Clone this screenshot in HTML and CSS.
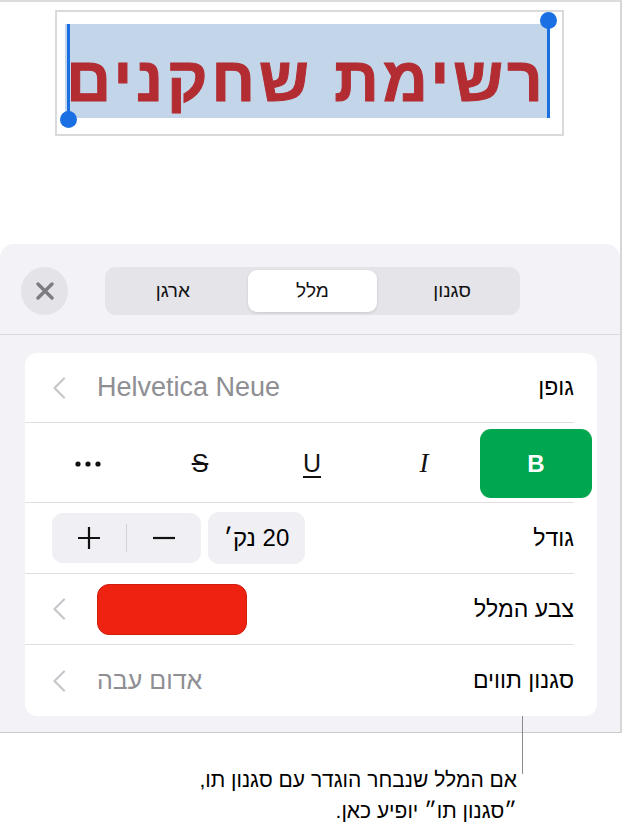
FILE: index.html
```html
<!DOCTYPE html>
<html lang="he">
<head>
<meta charset="utf-8">
<title>Text format</title>
<link rel="stylesheet" href="styles.css">
</head>
<body>
<div class="frame">
  <div class="canvas">
    <div class="title-box">
      <div class="highlight">
        <span class="title-text" dir="rtl">רשימת שחקנים</span>
        <span class="caret caret-left"></span>
        <span class="caret caret-right"></span>
      </div>
    </div>
  </div>
  <div class="sheet">
    <div class="sheet-header">
      <div class="close-btn">
        <svg width="18" height="18" viewBox="0 0 18 18"><path d="M2 2 L16 16 M16 2 L2 16" stroke="#7c7c81" stroke-width="3.4" stroke-linecap="round" fill="none"/></svg>
      </div>
      <div class="segmented" dir="ltr">
        <div class="seg">ארגן</div>
        <div class="seg active">מלל</div>
        <div class="seg">סגנון</div>
      </div>
    </div>
    <div class="card" dir="rtl">
      <div class="row">
        <span class="label">גופן</span>
        <span class="value-group">
          <span class="value latin" dir="ltr">Helvetica Neue</span>
          <svg class="chev" width="14" height="22" viewBox="0 0 14 22"><path d="M12 1.5 L2.5 11 L12 20.5" stroke="#c6c6cb" stroke-width="2.2" fill="none" stroke-linecap="round" stroke-linejoin="round"/></svg>
        </span>
      </div>
      <div class="row style-row">
        <div class="style-grid" dir="ltr">
          <div class="sbtn dots">
            <svg width="26" height="6" viewBox="0 0 26 6"><circle cx="3" cy="3" r="2.6" fill="#111"/><circle cx="13" cy="3" r="2.6" fill="#111"/><circle cx="23" cy="3" r="2.6" fill="#111"/></svg>
          </div>
          <div class="sbtn strike">S</div>
          <div class="sbtn under">U</div>
          <div class="sbtn ital">I</div>
          <div class="sbtn bold active">B</div>
        </div>
      </div>
      <div class="row">
        <span class="label">גודל</span>
        <span class="size-group">
          <span class="size-value">20 נק׳</span>
          <span class="stepper" dir="ltr">
            <span class="step">
              <svg width="24" height="24" viewBox="0 0 24 24"><path d="M12 1 V23 M1 12 H23" stroke="#111" stroke-width="2.2" fill="none"/></svg>
            </span>
            <span class="step-div"></span>
            <span class="step">
              <svg width="24" height="24" viewBox="0 0 24 24"><path d="M1 12 H23" stroke="#111" stroke-width="2.2" fill="none"/></svg>
            </span>
          </span>
        </span>
      </div>
      <div class="row">
        <span class="label">צבע המלל</span>
        <span class="value-group">
          <span class="swatch"></span>
          <svg class="chev" width="14" height="22" viewBox="0 0 14 22"><path d="M12 1.5 L2.5 11 L12 20.5" stroke="#c6c6cb" stroke-width="2.2" fill="none" stroke-linecap="round" stroke-linejoin="round"/></svg>
        </span>
      </div>
      <div class="row last">
        <span class="label">סגנון תווים</span>
        <span class="value-group">
          <span class="value">אדום עבה</span>
          <svg class="chev" width="14" height="22" viewBox="0 0 14 22"><path d="M12 1.5 L2.5 11 L12 20.5" stroke="#c6c6cb" stroke-width="2.2" fill="none" stroke-linecap="round" stroke-linejoin="round"/></svg>
        </span>
      </div>
    </div>
  </div>
</div>
<div class="callout-line"></div>
<p class="callout" dir="rtl">אם המלל שנבחר הוגדר עם סגנון תו,<br>״סגנון תו״ יופיע כאן.</p>
</body>
</html>
```
FILE: styles.css
```css
* { box-sizing: border-box; }

html, body {
  margin: 0;
  padding: 0;
}

body {
  width: 625px;
  height: 835px;
  overflow: hidden;
  position: relative;
  background: #ffffff;
  font-family: "Liberation Sans", "DejaVu Sans", sans-serif;
  color: #000;
}

.frame {
  width: 622px;
  height: 733px;
  border-top: 2px solid #dcdcdc;
  border-right: 2px solid #d6d6d6;
  border-bottom: 1px solid #c9c9c9;
  display: flex;
  flex-direction: column;
}

.canvas {
  height: 242px;
  padding: 8px 0 0 55px;
}

.title-box {
  width: 509px;
  height: 126px;
  border: 2px solid #dadada;
  padding: 12px 0 0 8px;
}

.highlight {
  position: relative;
  width: 483px;
  height: 94px;
  background: #c2d5e9;
  padding-top: 25px;
  text-align: center;
}

.title-text {
  display: block;
  font-size: 62px;
  line-height: 62px;
  font-weight: bold;
  letter-spacing: 4px;
  color: #b22c32;
  white-space: nowrap;
  -webkit-text-stroke: 1px #b22c32;
}

.caret {
  position: absolute;
  width: 3px;
  background: #1a6fe3;
}

.caret::after {
  content: "";
  position: absolute;
  width: 17px;
  height: 17px;
  border-radius: 50%;
  background: #1a6fe3;
  left: -7px;
}

.caret-left {
  left: 2px;
  top: 0;
  height: 96px;
}

.caret-left::after {
  bottom: -8px;
}

.caret-right {
  right: -2px;
  top: -4px;
  height: 98px;
}

.caret-right::after {
  top: -8px;
}

.sheet {
  flex: 1;
  background: #f2f2f7;
  border-radius: 14px 14px 0 0;
  display: flex;
  flex-direction: column;
}

.sheet-header {
  height: 91px;
  border-bottom: 1px solid #d9d9de;
  display: flex;
  align-items: flex-start;
  padding: 23px 0 0 21px;
}

.close-btn {
  width: 47px;
  height: 48px;
  border-radius: 50%;
  background: #e3e3e8;
  display: flex;
  align-items: center;
  justify-content: center;
}

.segmented {
  margin-left: 37px;
  width: 415px;
  height: 48px;
  background: #e4e4e9;
  border-radius: 11px;
  padding: 3px;
  display: flex;
  gap: 10px;
}

.seg {
  flex: 1;
  display: flex;
  align-items: center;
  justify-content: center;
  font-size: 19px;
  color: #111;
  border-radius: 9px;
}

.seg.active {
  background: #ffffff;
  box-shadow: 0 1px 3px rgba(0, 0, 0, 0.12);
}

.card {
  margin: 18px 23px 0 25px;
  background: #ffffff;
  border-radius: 12px;
  display: flex;
  flex-direction: column;
}

.row {
  height: 71px;
  margin-right: 23px;
  padding-left: 27px;
  border-bottom: 1px solid #dedee3;
  display: flex;
  align-items: center;
  justify-content: space-between;
}

.row:first-child {
  height: 70px;
}

.row.last {
  border-bottom: none;
}

.label {
  font-size: 23px;
  color: #000;
}

.value-group {
  display: flex;
  align-items: center;
  gap: 31px;
}

.value {
  font-size: 25px;
  color: #8e8e93;
}

.value.latin {
  font-size: 27px;
}

.chev {
  display: block;
}

.style-row {
  height: 80px;
  padding: 6px 0 4px 0;
  align-items: stretch;
}

.style-grid {
  margin: 0 -18px 0 7px;
  width: 560px;
  display: grid;
  grid-template-columns: repeat(5, 112px);
}

.sbtn {
  display: flex;
  align-items: center;
  justify-content: center;
  font-size: 25px;
  color: #111;
  border-radius: 11px;
}

.sbtn.dots svg {
  display: block;
}

.sbtn.strike {
  text-decoration: line-through;
  text-decoration-thickness: 2px;
}

.sbtn.under {
  text-decoration: underline;
  text-decoration-thickness: 2px;
  text-underline-offset: 4px;
}

.sbtn.ital {
  font-family: "Liberation Serif", serif;
  font-style: italic;
  font-size: 27px;
}

.sbtn.bold {
  font-weight: bold;
  font-size: 24px;
  color: #ffffff;
}

.sbtn.active {
  background: #00a650;
}

.size-group {
  display: flex;
  align-items: center;
  gap: 7px;
}

.size-value {
  width: 97px;
  height: 52px;
  border-radius: 11px;
  background: #efeff4;
  font-size: 24px;
  display: flex;
  align-items: center;
  justify-content: center;
}

.stepper {
  width: 149px;
  height: 50px;
  border-radius: 11px;
  background: #efeff4;
  display: flex;
  align-items: center;
}

.step {
  flex: 1;
  display: flex;
  align-items: center;
  justify-content: center;
}

.step svg {
  display: block;
}

.step-div {
  width: 1px;
  height: 28px;
  background: #d2d2d7;
}

.swatch {
  display: block;
  width: 150px;
  height: 51px;
  border-radius: 12px;
  background: #ee2210;
  border: 1px solid #cf1e0e;
}

.callout-line {
  position: absolute;
  left: 522px;
  top: 716px;
  width: 1px;
  height: 58px;
  background: #8b8b8b;
}

.callout {
  margin: 31px 108px 0 0;
  font-size: 21px;
  line-height: 31px;
  text-align: right;
  color: #000;
}
```
